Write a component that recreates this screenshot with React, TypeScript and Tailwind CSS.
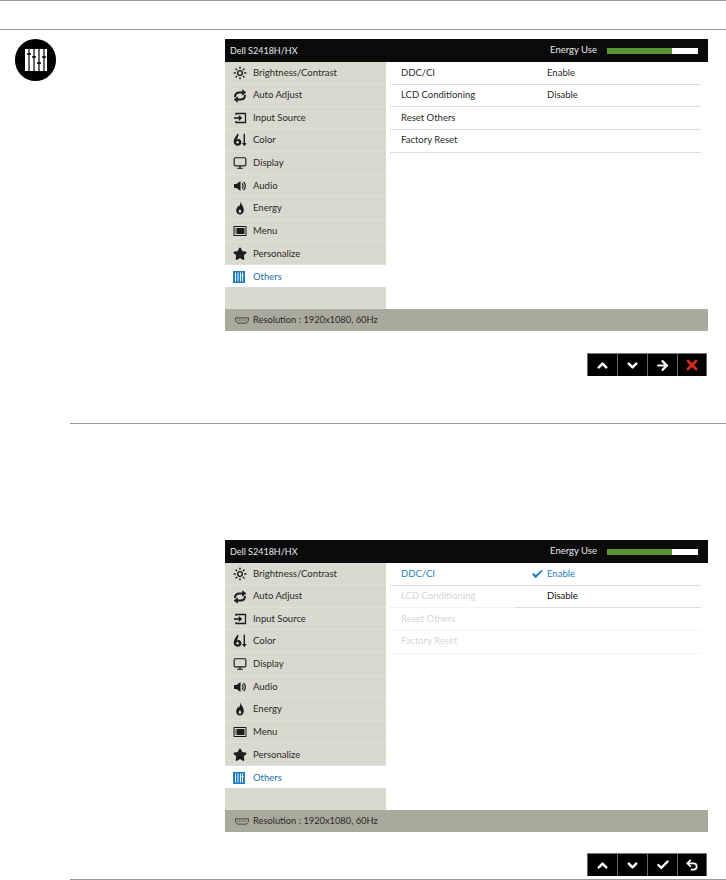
import { Check, ChevronDown, ChevronUp, ArrowRight, X, Undo2, Monitor, Star, Sun } from 'lucide-react';
import type { ReactNode } from 'react';

const iconCls = 'w-[14px] h-[14px] text-[#1c1c1c]';

function AutoIcon() {
  return (
    <svg viewBox="0 0 14 14" className={iconCls} fill="none" stroke="currentColor" strokeWidth="2">
      <path d="M2 8C2 4.8 4 3.5 6.5 3.5H11" />
      <path d="M12 6C12 9.2 10 10.5 7.5 10.5H3" />
      <path d="M9.5 0.8L13 3.5L9.5 6.2Z" fill="currentColor" strokeWidth="0.6" />
      <path d="M4.5 7.8L1 10.5L4.5 13.2Z" fill="currentColor" strokeWidth="0.6" />
    </svg>
  );
}

function InputIcon() {
  return (
    <svg viewBox="0 0 14 14" className={iconCls} fill="none" stroke="currentColor" strokeWidth="1.3">
      <path d="M3 4V2.5H12.5V11.5H3V10" />
      <path d="M1 7H8" strokeWidth="1.6" />
      <path d="M6 4.5L9 7L6 9.5Z" fill="currentColor" strokeWidth="0.5" />
    </svg>
  );
}

function ColorIcon() {
  return (
    <svg viewBox="0 0 14 14" className={iconCls} fill="currentColor">
      <path d="M4.5 0.8L2 4.5C0.3 7 0.3 10 1.8 11.6C3.4 13.2 6.2 13.2 7.6 11.6C9 10 8.6 7.5 7 6.5C6 5.8 4.8 6 4 6.8L5.6 1.2Z" />
      <circle cx="4.6" cy="9.2" r="1.3" fill="#d8d9cf" />
      <path d="M10.6 0.8H12V10H13.6L11.3 13.2L9 10H10.6Z" />
    </svg>
  );
}

function AudioIcon() {
  return (
    <svg viewBox="0 0 14 14" className={iconCls} fill="currentColor">
      <path d="M1 5H3.5L7.5 2V12L3.5 9H1Z" />
      <path d="M9 4.5C10.5 5.5 10.5 8.5 9 9.5M10.5 3C13 5 13 9 10.5 11" fill="none" stroke="currentColor" strokeWidth="1.2" />
    </svg>
  );
}

function EnergyIcon() {
  return (
    <svg viewBox="0 0 14 14" className={iconCls} fill="currentColor">
      <path d="M7.5 0.5C8 3 10.8 5.5 10.8 9C10.8 11.6 9 13.5 7 13.5C5 13.5 3.2 11.8 3.2 9.4C3.2 7.4 4.6 6.4 5.2 4.5C5.6 5 5.8 5.5 5.9 6C6.8 4.5 7.6 2.8 7.5 0.5Z" />
      <path d="M7 8C6 9.2 5.6 10 5.8 10.8C6 11.6 6.5 12 7 12C7.6 12 8.2 11.5 8.2 10.6C8.2 9.8 7.6 9 7 8Z" fill="#d8d9cf" />
    </svg>
  );
}

function MenuIcon() {
  return (
    <svg viewBox="0 0 14 14" className={iconCls} fill="none" stroke="currentColor">
      <rect x="1" y="2.5" width="12" height="9" strokeWidth="1" />
      <rect x="3.5" y="4" width="8" height="6" fill="currentColor" strokeWidth="0" />
      <path d="M2.2 4.5V9.5" strokeWidth="1" strokeDasharray="1 0.6" />
    </svg>
  );
}

function BadgeIcon() {
  return (
    <svg viewBox="0 0 24 24" className="w-[24px] h-[24px]">
      <rect x="1" y="1" width="22" height="22" fill="#ffffff" />
      {[5, 10, 15, 20].map((x) => (
        <path key={x} d={`M${x} 1V23`} stroke="#000000" strokeWidth="1.2" />
      ))}
      <path d="M3 6H7M8 9H12M13 15H17M18 9H22" stroke="#000000" strokeWidth="1.6" />
    </svg>
  );
}

function OthersIcon() {
  return (
    <svg viewBox="0 0 24 24" className="w-[12px] h-[12px]">
      <rect x="0" y="0" width="24" height="24" fill="#1d7fc0" />
      <path d="M5 3V21M10 3V21M15 3V21M19 3V21" stroke="#ffffff" strokeWidth="1.8" />
      <path d="M17 9H21" stroke="#ffffff" strokeWidth="2" />
    </svg>
  );
}

function PortIcon() {
  return (
    <svg viewBox="0 0 16 8" className="w-[14px] h-[7px] text-[#2c2c2c]" fill="none" stroke="currentColor" strokeWidth="0.9">
      <path d="M0.5 1H15.5V4L13 7H3L0.5 4Z" />
      <path d="M3 3.5H13" strokeDasharray="1 0.8" />
    </svg>
  );
}

function Tick() {
  return (
    <svg viewBox="0 0 11 8" className="absolute left-[-15px] top-[3px] w-[11px] h-[8px]" fill="currentColor">
      <path d="M0 4.2L1.6 3L3.8 5L9.4 0L11 0.6L4 8H3.2Z" />
    </svg>
  );
}

const menu: { label: string; h: string; icon: ReactNode }[] = [
  { label: 'Brightness/Contrast', h: 'h-[22.4px]', icon: <Sun className={iconCls} strokeWidth={2.4} /> },
  { label: 'Auto Adjust', h: 'h-[22.4px]', icon: <AutoIcon /> },
  { label: 'Input Source', h: 'h-[22.4px]', icon: <InputIcon /> },
  { label: 'Color', h: 'h-[22.4px]', icon: <ColorIcon /> },
  { label: 'Display', h: 'h-[23px]', icon: <Monitor className={iconCls} strokeWidth={2} /> },
  { label: 'Audio', h: 'h-[22.6px]', icon: <AudioIcon /> },
  { label: 'Energy', h: 'h-[22.6px]', icon: <EnergyIcon /> },
  { label: 'Menu', h: 'h-[22.6px]', icon: <MenuIcon /> },
  { label: 'Personalize', h: 'h-[22.6px]', icon: <Star className={iconCls} fill="currentColor" /> },
];

const options = [
  { label: 'DDC/CI', h: 'h-[23px]' },
  { label: 'LCD Conditioning', h: 'h-[22px]' },
  { label: 'Reset Others', h: 'h-[22.5px]' },
  { label: 'Factory Reset', h: 'h-[23px]' },
];

function Osd({ sub }: { sub?: boolean }) {
  return (
    <div className="w-[483px] h-[292px] flex flex-col font-['Lato',sans-serif] text-[9.5px] text-[#2a2a2a]">
      <div className="h-[23px] bg-[#0b0b0b] text-[#e8e8e8] flex items-center pl-[5px] pr-[10px] shrink-0">
        <span className="flex-1 text-[9px]">Dell S2418H/HX</span>
        <span className="mr-[10px]">Energy Use</span>
        <div className="w-[91px] h-[6px] bg-white flex">
          <div className="w-[65px] bg-[#5c9438]" />
        </div>
      </div>
      <div className="flex flex-1 min-h-0">
        <div className="w-[161px] bg-[#d8d9cf] flex flex-col">
          {menu.map((m) => (
            <div key={m.label} className={`${m.h} flex items-center border-b border-[#dfe0d8] pt-[1px]`}>
              <span className="w-[28px] pl-[8px] shrink-0 flex">{m.icon}</span>
              <span>{m.label}</span>
            </div>
          ))}
          <div className="h-[22.4px] flex items-center bg-white text-[#1d6fa8] pt-[1px]">
            <span className="w-[28px] pl-[8px] shrink-0 flex"><OthersIcon /></span>
            <span>Others</span>
          </div>
        </div>
        <div className="flex-1 min-w-0 pl-[4px] pr-[7px]">
          {options.map((o, i) => {
            const active = sub && i === 0;
            const dim = sub && i > 0;
            const leftBorder = dim ? 'border-[#f4f4f2]' : 'border-[#dedfda]';
            const rightBorder = sub && i > 1 ? 'border-[#f4f4f2]' : 'border-[#dedfda]';
            return (
              <div key={o.label} className={`${o.h} flex`}>
                <div className={`w-[125px] shrink-0 pl-[11px] flex items-center border-b ${leftBorder}`}>
                  <span className={active ? 'text-[#1d7fc0]' : dim ? 'text-[#d6d6d2]' : ''}>{o.label}</span>
                </div>
                <div className={`flex-1 pl-[32px] flex items-center border-b ${rightBorder}`}>
                  {i === 0 && (
                    <span className={`relative ${active ? 'text-[#1d7fc0]' : ''}`}>
                      {sub && <Tick />}
                      Enable
                    </span>
                  )}
                  {i === 1 && <span className={sub ? 'text-[#111]' : ''}>Disable</span>}
                </div>
              </div>
            );
          })}
        </div>
      </div>
      <div className="h-[22px] bg-[#a9a99c] flex items-center pl-[10px] gap-[4px] shrink-0">
        <PortIcon />
        <span className="text-[9.3px]">Resolution : 1920x1080, 60Hz</span>
      </div>
    </div>
  );
}

function KeyBar({ sub }: { sub?: boolean }) {
  const cls = 'text-white';
  const keys = sub
    ? [
        <ChevronUp key="u" className={`w-[15px] h-[15px] ${cls}`} strokeWidth={4} />,
        <ChevronDown key="d" className={`w-[15px] h-[15px] ${cls}`} strokeWidth={4} />,
        <Check key="c" className={`w-[14px] h-[14px] ${cls}`} strokeWidth={4} />,
        <Undo2 key="b" className={`w-[14px] h-[14px] ${cls}`} strokeWidth={3} />,
      ]
    : [
        <ChevronUp key="u" className={`w-[15px] h-[15px] ${cls}`} strokeWidth={4} />,
        <ChevronDown key="d" className={`w-[15px] h-[15px] ${cls}`} strokeWidth={4} />,
        <ArrowRight key="r" className={`w-[15px] h-[15px] ${cls}`} strokeWidth={3.5} />,
        <X key="x" className="w-[16px] h-[16px] text-[#d42a1e]" strokeWidth={4.5} />,
      ];
  return (
    <div className="flex justify-end w-[483px] pr-[1px]">
      <div className="flex h-[23px] border-t border-[#777] bg-black">
        {keys.map((k, i) => (
          <div key={i} className="w-[30px] flex items-center justify-center border-l border-[#666] last:border-r">
            {k}
          </div>
        ))}
      </div>
    </div>
  );
}

export default function App() {
  return (
    <div className="w-[726px] h-[880px] bg-white overflow-hidden">
      <div className="h-[30px] border-t border-b border-[#999]" />
      <section className="flex pt-[9px] pb-[47px]">
        <div className="w-[225px] shrink-0 pl-[15px]">
          <div className="w-[41px] h-[42px] rounded-full bg-black flex items-center justify-center">
            <BadgeIcon />
          </div>
        </div>
        <div className="flex flex-col gap-[22px]">
          <Osd />
          <KeyBar />
        </div>
      </section>
      <div className="ml-[70px] border-t border-[#999]" />
      <section className="pl-[225px] pt-[116px] flex flex-col gap-[21px]">
        <Osd sub />
        <KeyBar sub />
      </section>
      <div className="ml-[70px] mt-[3px] border-t border-[#999]" />
    </div>
  );
}
